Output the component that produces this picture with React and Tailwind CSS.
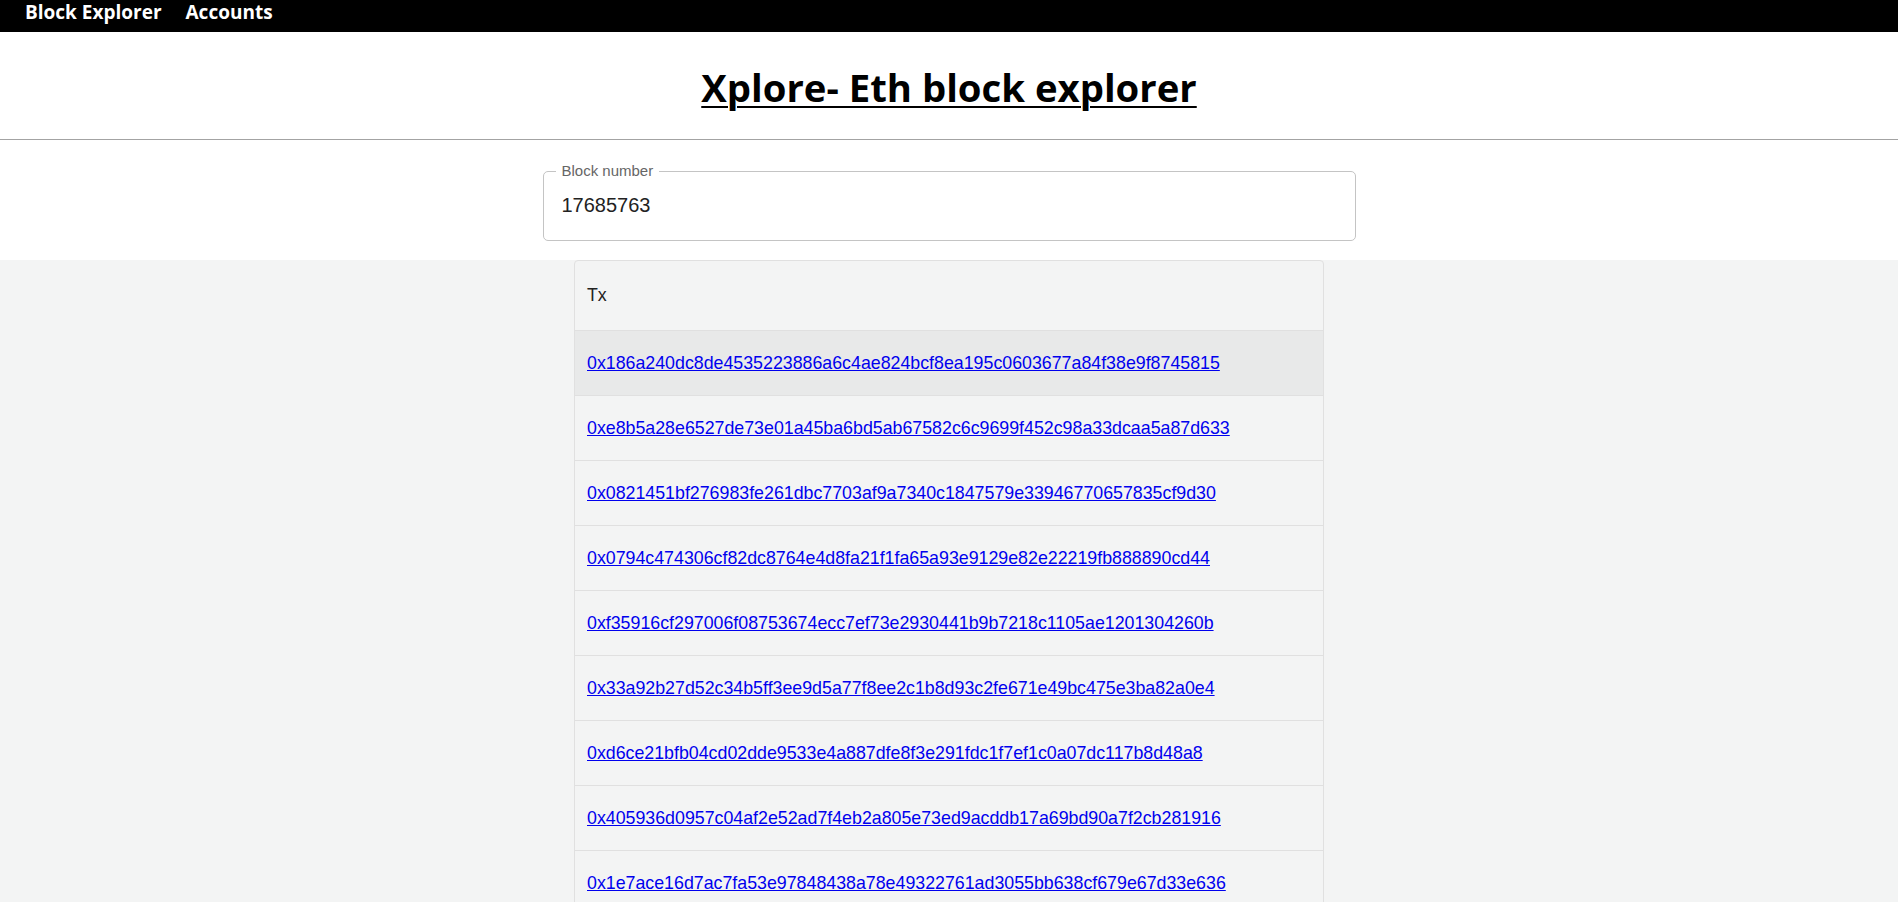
import React from "react";

const txs = [
  "0x186a240dc8de4535223886a6c4ae824bcf8ea195c0603677a84f38e9f8745815",
  "0xe8b5a28e6527de73e01a45ba6bd5ab67582c6c9699f452c98a33dcaa5a87d633",
  "0x0821451bf276983fe261dbc7703af9a7340c1847579e33946770657835cf9d30",
  "0x0794c474306cf82dc8764e4d8fa21f1fa65a93e9129e82e22219fb888890cd44",
  "0xf35916cf297006f08753674ecc7ef73e2930441b9b7218c1105ae1201304260b",
  "0x33a92b27d52c34b5ff3ee9d5a77f8ee2c1b8d93c2fe671e49bc475e3ba82a0e4",
  "0xd6ce21bfb04cd02dde9533e4a887dfe8f3e291fdc1f7ef1c0a07dc117b8d48a8",
  "0x405936d0957c04af2e52ad7f4eb2a805e73ed9acddb17a69bd90a7f2cb281916",
  "0x1e7ace16d7ac7fa53e97848438a78e49322761ad3055bb638cf679e67d33e636",
];

export default function App() {
  return (
    <div className="w-[1898px] min-h-screen bg-[#f3f4f4] font-['Liberation_Sans',Arial,sans-serif]">
      <nav className="h-8 bg-black flex items-start gap-[24px] pl-[25px] font-['Open_Sans',sans-serif] font-bold text-white text-[19px] leading-[24px]">
        <a className="cursor-pointer">Block Explorer</a>
        <a className="cursor-pointer">Accounts</a>
      </nav>
      <div className="bg-white">
        <div className="h-[107px] pt-[31px] flex justify-center">
          <h1 className="font-['Open_Sans',sans-serif] font-bold text-[38.3px] leading-[48px] text-black underline underline-offset-[4px] decoration-[2px]">
            Xplore- Eth block explorer
          </h1>
        </div>
        <div className="h-px bg-[#a3a3a3]" />
        <div className="h-[120px] pt-[31px] flex justify-center">
          <div className="relative w-[813px] h-[70px] border border-[#c4c4c4] rounded-[5px] flex items-center pl-[18px] pb-[2px]">
            <span className="absolute -top-[10px] left-[12px] px-[6px] bg-white text-[15px] leading-[18px] text-[#666]">
              Block number
            </span>
            <span className="text-[20px] text-[#222]">17685763</span>
          </div>
        </div>
      </div>
      <div className="flex justify-center">
        <div className="w-[750px] border border-[#e0e0e0] rounded-[4px] bg-[#f3f4f4]">
          <div className="h-[70px] border-b border-[#e0e0e0] flex items-center pl-[12px] text-[17.8px] text-[#222]">
            Tx
          </div>
          {txs.map((t, i) => (
            <div
              key={t}
              className={
                i === 0
                  ? "h-[65px] border-b border-[#e0e0e0] flex items-center pl-[12px] bg-[#e8e9e9]"
                  : "h-[65px] border-b border-[#e0e0e0] flex items-center pl-[12px]"
              }
            >
              <a className="text-[17.8px] text-[#0000ee] underline cursor-pointer">{t}</a>
            </div>
          ))}
        </div>
      </div>
    </div>
  );
}
